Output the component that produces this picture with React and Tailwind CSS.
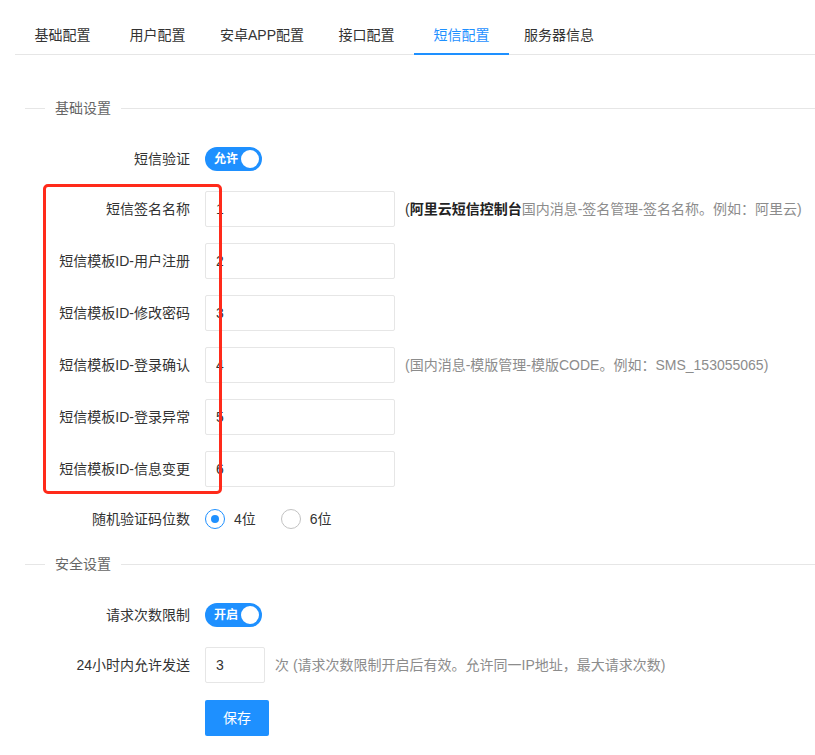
import React, { useState } from "react";

const FONT = {
  fontFamily: '"Liberation Sans", "Noto Sans CJK SC", sans-serif',
};

const tabs = ["基础配置", "用户配置", "安卓APP配置", "接口配置", "短信配置", "服务器信息"];

const Legend = ({ title, className }) => (
  <div className={"flex items-center " + className}>
    <div className="w-[20px] border-t border-[#e6e6e6]" />
    <span className="px-[10px] text-[14px] leading-[20px] text-[#666]">{title}</span>
    <div className="flex-1 border-t border-[#e6e6e6]" />
  </div>
);

const Row = ({ label, children, className }) => (
  <div className={"flex items-center h-[36px] " + (className || "")}>
    <label className="w-[180px] shrink-0 pr-[15px] text-right text-[14px] text-[#333]">
      {label}
    </label>
    {children}
  </div>
);

const Switch = ({ text }) => (
  <div className="flex items-center h-[24px] w-[57px] rounded-full bg-[#1e90ff] pl-[9px] pr-[3px]">
    <span className="text-[12px] font-bold text-white leading-none">{text}</span>
    <span className="ml-auto w-[18px] h-[18px] rounded-full bg-white" />
  </div>
);

const TextInput = ({ value, w = "w-[190px]" }) => (
  <input
    defaultValue={value}
    className={
      w +
      " h-[36px] border border-[#e6e6e6] rounded-[2px] px-[10px] text-[14px] text-[#333] outline-none"
    }
  />
);

const Radio = ({ checked, label }) => (
  <div className="flex items-center mr-[25px]">
    <span
      className={
        "w-[20px] h-[20px] rounded-full border flex items-center justify-center " +
        (checked ? "border-[#1e90ff] border-[1.5px]" : "border-[#c2c2c2]")
      }
    >
      {checked && <span className="w-[8px] h-[8px] rounded-full bg-[#1e90ff]" />}
    </span>
    <span className="ml-[9px] text-[14px] text-[#333]">{label}</span>
  </div>
);

export default function App() {
  const [active] = useState(4);

  return (
    <div className="relative w-[815px] h-[755px] bg-white overflow-hidden pl-[15px] pt-[15px]" style={FONT}>
      {/* Tabs */}
      <div className="flex h-[40px] border-b border-[#e6e6e6]">
        {tabs.map((t, i) => (
          <div
            key={t}
            className={
              "relative px-[15px] min-w-[95px] text-center text-[14px] leading-[40px] " +
              (i === active ? "text-[#1e90ff]" : "text-[#333]")
            }
          >
            {t}
            {i === active && (
              <div className="absolute left-0 right-0 bottom-[-1px] h-[2px] bg-[#1e90ff]" />
            )}
          </div>
        ))}
      </div>

      <div className="pl-[10px]">
        <Legend title="基础设置" className="mt-[43px]" />

        <Row label="短信验证" className="mt-[23px]">
          <Switch text="允许" />
        </Row>

        <Row label="短信签名名称" className="mt-[14px]">
          <TextInput value="1" />
          <span className="ml-[10px] text-[14px] text-[#8c8c8c] whitespace-nowrap">
            <span className="text-[#333]">(</span>
            <b className="text-[#222]">阿里云短信控制台</b>
            国内消息-签名管理-签名名称。例如：阿里云)
          </span>
        </Row>
        <Row label="短信模板ID-用户注册" className="mt-[16px]">
          <TextInput value="2" />
        </Row>
        <Row label="短信模板ID-修改密码" className="mt-[16px]">
          <TextInput value="3" />
        </Row>
        <Row label="短信模板ID-登录确认" className="mt-[16px]">
          <TextInput value="4" />
          <span className="ml-[10px] text-[14px] text-[#8c8c8c] whitespace-nowrap">
            (国内消息-模版管理-模版CODE。例如：SMS_153055065)
          </span>
        </Row>
        <Row label="短信模板ID-登录异常" className="mt-[16px]">
          <TextInput value="5" />
        </Row>
        <Row label="短信模板ID-信息变更" className="mt-[16px]">
          <TextInput value="6" />
        </Row>

        <Row label="随机验证码位数" className="mt-[14px]">
          <Radio checked label="4位" />
          <Radio label="6位" />
        </Row>

        <Legend title="安全设置" className="mt-[17px]" />

        <Row label="请求次数限制" className="mt-[23px]">
          <Switch text="开启" />
        </Row>

        <Row label="24小时内允许发送" className="mt-[14px]">
          <TextInput value="3" w="w-[60px]" />
          <span className="ml-[10px] text-[14px] text-[#8c8c8c] whitespace-nowrap">
            次 (请求次数限制开启后有效。允许同一IP地址，最大请求次数)
          </span>
        </Row>

        <div className="flex mt-[17px]">
          <div className="w-[180px]" />
          <button className="h-[36px] w-[64px] rounded-[2px] bg-[#1e90ff] text-white text-[14px]">
            保存
          </button>
        </div>
      </div>

      {/* Annotation box */}
      <div className="absolute left-[43px] top-[184px] w-[179px] h-[310px] border-[3px] border-[#ff2a1a] rounded-[5px] pointer-events-none" />
    </div>
  );
}
